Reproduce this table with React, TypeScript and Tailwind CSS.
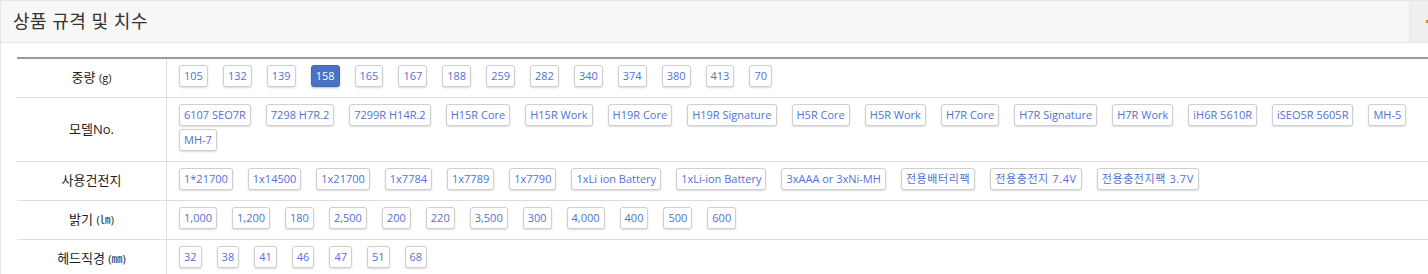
import React from "react";

type Row = { label: React.ReactNode; items: string[]; selected?: string };

const rows: Row[] = [
  {
    label: (
      <>
        중량 <span className="text-[11px]">(g)</span>
      </>
    ),
    items: ["105", "132", "139", "158", "165", "167", "188", "259", "282", "340", "374", "380", "413", "70"],
    selected: "158",
  },
  {
    label: <>모델No.</>,
    items: [
      "6107 SEO7R",
      "7298 H7R.2",
      "7299R H14R.2",
      "H15R Core",
      "H15R Work",
      "H19R Core",
      "H19R Signature",
      "H5R Core",
      "H5R Work",
      "H7R Core",
      "H7R Signature",
      "H7R Work",
      "iH6R 5610R",
      "iSEO5R 5605R",
      "MH-5",
      "MH-7",
    ],
  },
  {
    label: <>사용건전지</>,
    items: [
      "1*21700",
      "1x14500",
      "1x21700",
      "1x7784",
      "1x7789",
      "1x7790",
      "1xLi ion Battery",
      "1xLi-ion Battery",
      "3xAAA or 3xNi-MH",
      "전용배터리팩",
      "전용충전지 7.4V",
      "전용충전지팩 3.7V",
    ],
  },
  {
    label: (
      <>
        밝기 <span className="text-[11px]">(㏐)</span>
      </>
    ),
    items: ["1,000", "1,200", "180", "2,500", "200", "220", "3,500", "300", "4,000", "400", "500", "600"],
  },
  {
    label: (
      <>
        헤드직경 <span className="text-[11px]">(㎜)</span>
      </>
    ),
    items: ["32", "38", "41", "46", "47", "51", "68"],
  },
];

function Chip({ text, active }: { text: string; active?: boolean }) {
  const korean = /[가-힣]/.test(text);
  const base =
    "inline-flex items-center h-[22px] px-[4px] rounded-[3px] text-[11px] whitespace-nowrap " +
    (korean ? "tracking-[0.6px] " : "");
  return (
    <span
      className={
        base +
        (active
          ? "border border-[#4068b8] bg-[#4a72c4] text-white shadow-[0_1px_2px_rgba(0,0,0,0.25)]"
          : "border border-[#cfcfcf] bg-white text-[#5072d6] shadow-[0_1px_2px_rgba(0,0,0,0.15)]")
      }
    >
      {text}
    </span>
  );
}

export default function App() {
  return (
    <div className="w-[1428px] h-[274px] overflow-hidden bg-white font-['Open_Sans','Noto_Sans_CJK_KR',sans-serif]">
      <div className="w-[1470px] border-l border-t border-[#e6e6e6]">
        <div className="flex h-[42px] border-b border-[#e8e8e8]">
          <div className="w-[1409px] bg-[#f7f7f7] border-r border-[#e9e9e9] pl-[12px] flex items-center text-[18px] tracking-[0.5px] text-[#333]">
            상품 규격 및 치수
          </div>
          <div className="flex-1 bg-[#efefef] relative">
            <span className="absolute left-[16px] top-[19px] w-[3px] h-[3px] bg-[#b08a4a]" />
          </div>
        </div>
        <div className="pt-[14px] pl-[16px]">
          <div className="w-[1440px] border-t-2 border-[#9a9a9a]">
            {rows.map((r, i) => (
              <div key={i} className="flex border-b border-[#dddddd]">
                <div className="w-[150px] shrink-0 border-r border-[#dddddd] flex items-center justify-center text-[13px] text-[#222]">
                  <span>{r.label}</span>
                </div>
                <div className="flex-1 pl-[12px] pr-[12px] pt-[6px] pb-[10px] flex flex-wrap gap-x-[15px] gap-y-[3px]">
                  {r.items.map((t) => (
                    <Chip key={t} text={t} active={t === r.selected} />
                  ))}
                </div>
              </div>
            ))}
          </div>
        </div>
      </div>
    </div>
  );
}
